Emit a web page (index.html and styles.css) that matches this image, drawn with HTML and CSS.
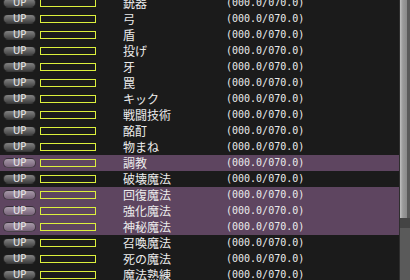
FILE: index.html
```html
<!DOCTYPE html>
<html lang="ja">
<head>
    <meta charset="UTF-8">
    <title>Skills</title>
    <link rel="stylesheet" href="styles.css">
</head>
<body>

<div class="skill-window">
    <div class="skill-list">
        <div class="row"><span class="up">UP</span><span class="gauge"></span><span class="name">銃器</span><span class="value">(000.0/070.0)</span></div>
        <div class="row"><span class="up">UP</span><span class="gauge"></span><span class="name">弓</span><span class="value">(000.0/070.0)</span></div>
        <div class="row"><span class="up">UP</span><span class="gauge"></span><span class="name">盾</span><span class="value">(000.0/070.0)</span></div>
        <div class="row"><span class="up">UP</span><span class="gauge"></span><span class="name">投げ</span><span class="value">(000.0/070.0)</span></div>
        <div class="row"><span class="up">UP</span><span class="gauge"></span><span class="name">牙</span><span class="value">(000.0/070.0)</span></div>
        <div class="row"><span class="up">UP</span><span class="gauge"></span><span class="name">罠</span><span class="value">(000.0/070.0)</span></div>
        <div class="row"><span class="up">UP</span><span class="gauge"></span><span class="name">キック</span><span class="value">(000.0/070.0)</span></div>
        <div class="row"><span class="up">UP</span><span class="gauge"></span><span class="name">戦闘技術</span><span class="value">(000.0/070.0)</span></div>
        <div class="row"><span class="up">UP</span><span class="gauge"></span><span class="name">酩酊</span><span class="value">(000.0/070.0)</span></div>
        <div class="row"><span class="up">UP</span><span class="gauge"></span><span class="name">物まね</span><span class="value">(000.0/070.0)</span></div>
        <div class="row selected"><span class="up">UP</span><span class="gauge"></span><span class="name">調教</span><span class="value">(000.0/070.0)</span></div>
        <div class="row"><span class="up">UP</span><span class="gauge"></span><span class="name">破壊魔法</span><span class="value">(000.0/070.0)</span></div>
        <div class="row selected"><span class="up">UP</span><span class="gauge"></span><span class="name">回復魔法</span><span class="value">(000.0/070.0)</span></div>
        <div class="row selected"><span class="up">UP</span><span class="gauge"></span><span class="name">強化魔法</span><span class="value">(000.0/070.0)</span></div>
        <div class="row selected"><span class="up">UP</span><span class="gauge"></span><span class="name">神秘魔法</span><span class="value">(000.0/070.0)</span></div>
        <div class="row"><span class="up">UP</span><span class="gauge"></span><span class="name">召喚魔法</span><span class="value">(000.0/070.0)</span></div>
        <div class="row"><span class="up">UP</span><span class="gauge"></span><span class="name">死の魔法</span><span class="value">(000.0/070.0)</span></div>
        <div class="row"><span class="up">UP</span><span class="gauge"></span><span class="name">魔法熟練</span><span class="value">(000.0/070.0)</span></div>
    </div>
    <div class="scrollbar">
        <div class="thumb"></div>
        <div class="track"></div>
    </div>
</div>

</body>
</html>
```

FILE: styles.css
```css
body {
    margin: 0;
    background-color: #1b1b1b;
    overflow: hidden;
}
.skill-window {
    display: flex;
    width: 410px;
    height: 280px;
    overflow: hidden;
}
.skill-list {
    width: 399px;
    margin-top: -5px;
}
.row {
    display: flex;
    align-items: center;
    height: 16px;
    color: #ececec;
}
.row.selected {
    background-color: #5e4560;
}
.up {
    box-sizing: border-box;
    margin-left: 3px;
    width: 33px;
    height: 10px;
    border-radius: 5px;
    border: 1px solid rgba(0, 0, 0, 0.55);
    background: linear-gradient(to bottom, rgba(255, 255, 255, 0.46), rgba(255, 255, 255, 0.16));
    font-family: "DejaVu Sans Condensed", "DejaVu Sans", sans-serif;
    font-size: 11px;
    line-height: 8px;
    text-align: center;
    color: #e8e8e8;
}
.gauge {
    box-sizing: border-box;
    margin-left: 4px;
    width: 56px;
    height: 8px;
    border: 1px solid #dcf03c;
}
.name {
    margin-left: 27px;
    width: 103px;
    font-family: "Noto Sans CJK JP", sans-serif;
    font-size: 12px;
    line-height: 16px;
}
.value {
    font-family: "DejaVu Sans Mono", monospace;
    font-size: 10px;
    line-height: 16px;
}
.scrollbar {
    display: flex;
    flex-direction: column;
    width: 11px;
    background-color: #2e2e2e;
}
.thumb {
    margin-left: 1px;
    width: 7px;
    height: 218px;
    background: linear-gradient(to right, #c0c0c0, #9a9a9a 40%, #8a8a8a);
    border-right: 3px solid #5a5a5a;
}
.track {
    flex: 1;
    margin-left: 1px;
    background-color: #5a5a5a;
    border-top: 10px solid #444;
}
```
